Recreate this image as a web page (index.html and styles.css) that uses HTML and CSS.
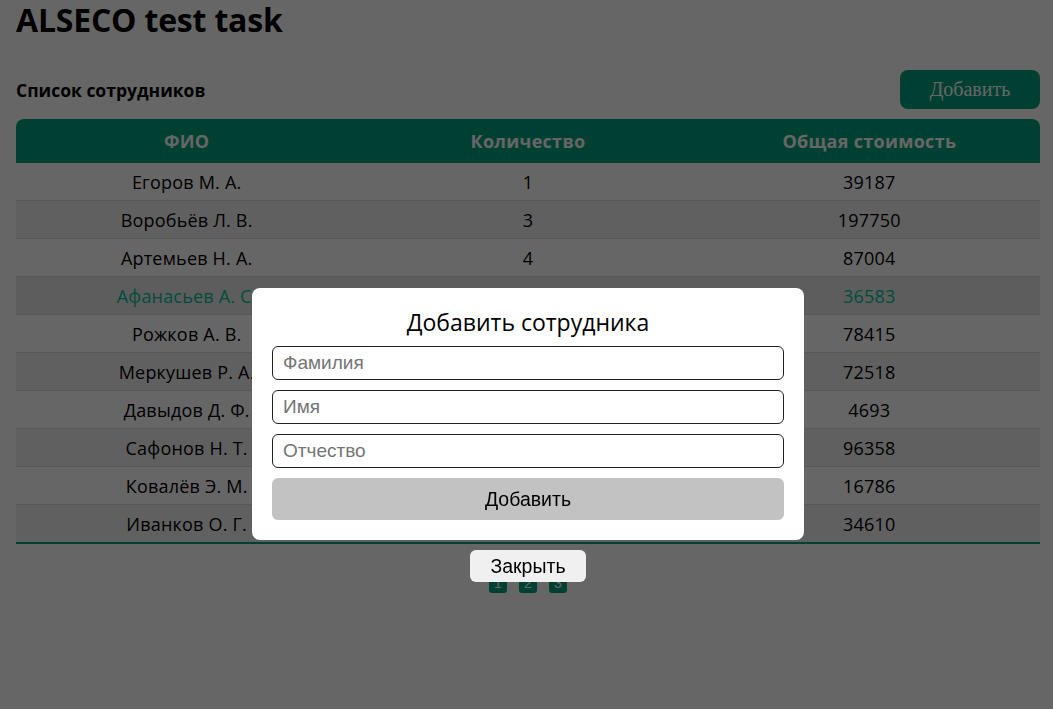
FILE: index.html
```html
<!DOCTYPE html>
<html lang="ru">
<head>
<meta charset="utf-8">
<title>ALSECO test task</title>
<link rel="stylesheet" href="styles.css">
</head>
<body>
<div class="page">
  <h1 class="title">ALSECO test task</h1>
  <div class="toolbar">
    <h2 class="subtitle">Список сотрудников</h2>
    <button class="add-btn">Добавить</button>
  </div>
  <div class="table">
    <div class="row head"><div>ФИО</div><div>Количество</div><div>Общая стоимость</div></div>
    <div class="row"><div>Егоров М. А.</div><div>1</div><div>39187</div></div>
    <div class="row alt"><div>Воробьёв Л. В.</div><div>3</div><div>197750</div></div>
    <div class="row"><div>Артемьев Н. А.</div><div>4</div><div>87004</div></div>
    <div class="row alt active"><div>Афанасьев А. С.</div><div>2</div><div>36583</div></div>
    <div class="row"><div>Рожков А. В.</div><div>3</div><div>78415</div></div>
    <div class="row alt"><div>Меркушев Р. А.</div><div>2</div><div>72518</div></div>
    <div class="row"><div>Давыдов Д. Ф.</div><div>1</div><div>4693</div></div>
    <div class="row alt"><div>Сафонов Н. Т.</div><div>4</div><div>96358</div></div>
    <div class="row"><div>Ковалёв Э. М.</div><div>1</div><div>16786</div></div>
    <div class="row alt last"><div>Иванков О. Г.</div><div>2</div><div>34610</div></div>
  </div>
  <div class="pager">
    <button class="page-btn">1</button>
    <button class="page-btn">2</button>
    <button class="page-btn">3</button>
  </div>
</div>
<div class="overlay">
  <div class="modal">
    <div class="modal-title">Добавить сотрудника</div>
    <input class="field" type="text" placeholder="Фамилия">
    <input class="field" type="text" placeholder="Имя">
    <input class="field" type="text" placeholder="Отчество">
    <button class="submit">Добавить</button>
  </div>
  <button class="close">Закрыть</button>
</div>
</body>
</html>
```
FILE: styles.css
```css
html, body {
  margin: 0;
  padding: 0;
  background: #ffffff;
}
body {
  font-family: "Open Sans", "Noto Sans", sans-serif;
  color: #000;
}
.page {
  padding: 0 13px 0 16px;
}
.title {
  margin: 0;
  font-size: 32px;
  line-height: 40px;
  font-weight: 700;
  letter-spacing: -0.2px;
}
.toolbar {
  margin-top: 30px;
  display: flex;
  align-items: center;
  justify-content: space-between;
  height: 39px;
}
.subtitle {
  margin: 0;
  font-size: 17.5px;
  font-weight: 700;
}
.add-btn {
  width: 140px;
  height: 39px;
  border: none;
  border-radius: 8px;
  background: #00a07d;
  color: #ffffff;
  font-family: "Liberation Serif", serif;
  font-size: 20px;
}
.table {
  margin-top: 10px;
  border-bottom: 2px solid #00a07d;
}
.row {
  display: grid;
  grid-template-columns: 1fr 1fr 1fr;
  height: 37px;
  border-bottom: 1px solid #dcdcdc;
  align-items: center;
  text-align: center;
  font-size: 18px;
  letter-spacing: 0.2px;
  color: #000;
}
.row.alt {
  background: #f0f0f0;
}
.row.active {
  background: #e8e8e8;
  color: #00c29c;
}
.row.last {
  border-bottom: none;
}
.row.head {
  height: 44px;
  border-bottom: none;
  background: #00a07d;
  color: #ffffff;
  font-weight: 700;
  font-size: 18px;
  letter-spacing: 0.3px;
  border-radius: 8px 8px 0 0;
}
.pager {
  display: flex;
  justify-content: center;
  gap: 12px;
  margin-top: 29px;
}
.page-btn {
  width: 18px;
  height: 20px;
  padding: 0;
  border: none;
  border-radius: 3px;
  background: #00a07d;
  color: #ffffff;
  font-size: 14px;
}
.overlay {
  position: fixed;
  inset: 0;
  background: rgba(0, 0, 0, 0.6);
  display: flex;
  flex-direction: column;
  align-items: center;
  padding: 288px 13px 0 16px;
  gap: 10px;
}
.modal {
  width: 512px;
  padding: 20px;
  background: #ffffff;
  border-radius: 8px;
  display: flex;
  flex-direction: column;
  gap: 10px;
}
.modal-title {
  text-align: center;
  font-size: 23px;
  line-height: 28px;
}
.field {
  box-sizing: border-box;
  height: 34px;
  width: 100%;
  border: 1px solid #222;
  border-radius: 6px;
  padding: 0 10px;
  font-family: "Liberation Sans", Arial, sans-serif;
  font-size: 19px;
}
.field::placeholder {
  color: #757575;
}
.submit {
  height: 42px;
  border: none;
  border-radius: 6px;
  background: #c2c2c2;
  font-family: "Liberation Sans", Arial, sans-serif;
  font-size: 19.5px;
  color: #000;
}
.close {
  width: 116px;
  height: 32px;
  border: none;
  border-radius: 6px;
  background: #f0f0f0;
  font-family: "Liberation Sans", Arial, sans-serif;
  font-size: 19.5px;
  color: #000;
}
```
